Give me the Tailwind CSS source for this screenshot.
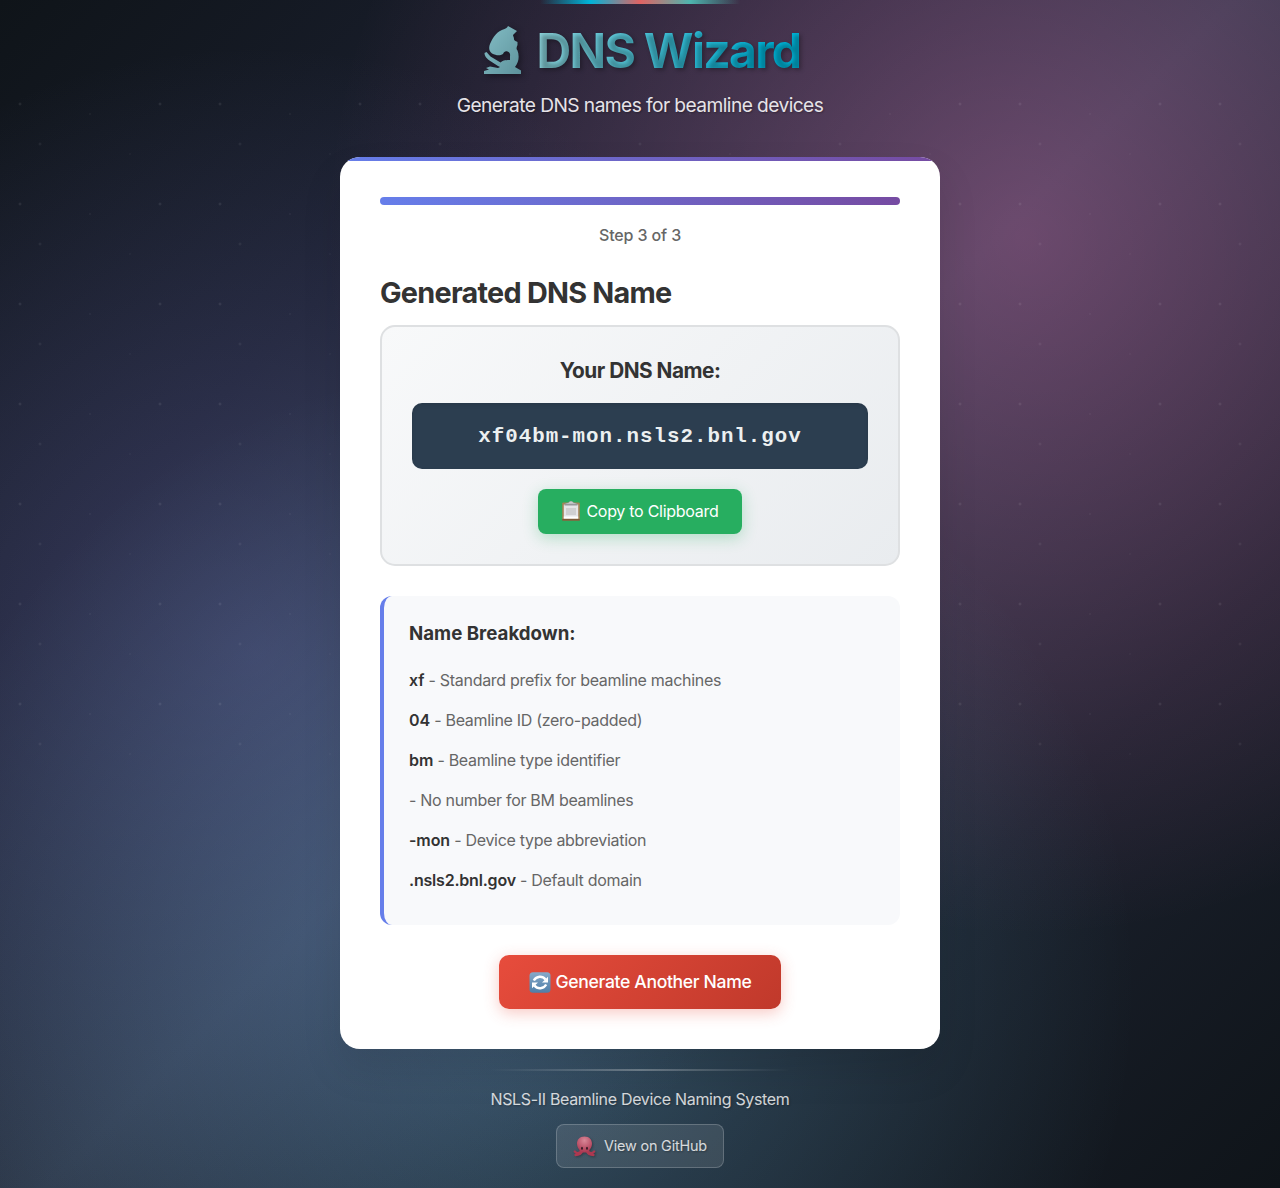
<!DOCTYPE html>
<html lang="en">
<head>
<meta charset="utf-8">
<title>DNS Wizard</title>
<script src="https://cdn.jsdelivr.net/npm/@tailwindcss/browser@4"></script>
</head>
<body class="relative h-[1188px] overflow-hidden font-['Inter',sans-serif] text-[#333] bg-[radial-gradient(circle_at_20%_55%,rgba(120,119,198,0.3)_0%,transparent_50%),radial-gradient(circle_at_80%_20%,rgba(255,119,198,0.3)_0%,transparent_50%),radial-gradient(circle_at_40%_83%,rgba(120,219,255,0.24)_0%,transparent_50%),linear-gradient(135deg,#0f1419_0%,#1a1f2e_25%,#2d3748_50%,#1a202c_75%,#0f1419_100%)]">
<!-- star field -->
<div class="absolute inset-x-0 top-[74px] h-[720px] opacity-30 bg-[radial-gradient(2px_2px_at_20px_30px,rgba(255,255,255,0.4),transparent),radial-gradient(2px_2px_at_40px_70px,rgba(255,255,255,0.3),transparent),radial-gradient(1px_1px_at_90px_40px,rgba(255,255,255,0.4),transparent),radial-gradient(1px_1px_at_130px_80px,rgba(255,255,255,0.3),transparent),radial-gradient(2px_2px_at_160px_30px,rgba(255,255,255,0.4),transparent)] bg-size-[200px_100px]"></div>
<div class="relative mx-auto flex w-[600px] flex-col items-center">
  <div class="h-1 w-[200px] bg-[linear-gradient(90deg,transparent,#00b4d8,#e06363,#4eb5ae,transparent)]"></div>
  <header class="flex h-[153px] flex-col items-center">
    <h1 class="mt-[17px] flex h-[60px] items-center pl-[3px] text-[48px] font-bold leading-[60px] tracking-[-1.7px]">
      <svg class="mr-[14px] h-[50px] w-[40px] drop-shadow-[2px_2px_3px_rgba(0,0,0,0.4)]" viewBox="0 0 40 50">
        <defs><linearGradient id="scope" x1="0" y1="0" x2="1" y2="1"><stop offset="0" stop-color="#84bec6"/><stop offset="1" stop-color="#5d929b"/></linearGradient></defs>
        <path fill="url(#scope)" d="M25 0C24 2 23 2.500 21.500 3C14 5 10 11 7 18C5.500 22 6 25 9 27.500C13 29.500 17 30 20 28C21 26 22 25 24.500 25.500C26.500 26 27.500 28 27 30V34C24 34 20 34 17.500 36.500L7.500 30.500L3.500 26L1.500 27C1.500 31 5 33.500 8 35.500L15 40L17 41L15 42L7 40.500L3 42L6 43.500L1 45V48H38V44.500L32 41C36 36 36.500 30 34.500 24.500C33 23 33.500 21 34.500 19V16C33.500 15 31 15 31 13C31 11 30 10 30 9L34 5Z"/>
      </svg>
      <span class="text-transparent bg-clip-text bg-[linear-gradient(100deg,#8fd3da,#00b4d8_85%)] [text-shadow:2px_2px_4px_rgba(0,0,0,0.3)]">DNS Wizard</span>
    </h1>
    <p class="mt-[9px] text-[19.2px] leading-[30px] tracking-[-0.58px] text-[#e6e3e8] [text-shadow:1px_1px_2px_rgba(0,0,0,0.3)]">Generate DNS names for beamline devices</p>
  </header>
  <main class="relative flex h-[892px] w-full flex-col overflow-hidden rounded-[20px] bg-white px-10 pt-10 shadow-[0_20px_40px_rgba(0,0,0,0.1)]">
    <div class="absolute inset-x-0 top-0 h-1 bg-[linear-gradient(90deg,#667eea,#764ba2)]"></div>
    <div class="h-2 shrink-0 rounded-full bg-[linear-gradient(90deg,#667eea,#764ba2)]"></div>
    <p class="mt-[18px] text-center text-[16px] font-medium leading-6 tracking-[-0.13px] text-[#666]">Step 3 of 3</p>
    <h2 class="mt-[28px] text-[28.8px] font-bold leading-9 tracking-[-0.74px]">Generated DNS Name</h2>
    <section class="mt-[14px] flex h-[241px] shrink-0 flex-col items-center rounded-[15px] border-2 border-[#dee0e2] bg-linear-[135deg] from-[#f8f9fa] to-[#e9ecef] px-[30px]">
      <h3 class="mt-[30px] text-[20.8px] font-bold leading-7 tracking-[-0.5px]">Your DNS Name:</h3>
      <div class="mt-[18px] flex h-[66px] w-full items-center justify-center rounded-[10px] bg-[#2c3e50] pt-px font-['Liberation_Mono',monospace] text-[20.8px] font-bold tracking-[1px] text-[#ecf0f1] shadow-[inset_0_2px_4px_rgba(0,0,0,0.1)]">xf04bm-mon.nsls2.bnl.gov</div>
      <button class="mt-5 flex h-[45px] w-[204px] items-center justify-center rounded-lg bg-[#27ae60] pb-px text-[16px] tracking-[-0.27px] text-white shadow-[0_4px_15px_rgba(39,174,96,0.3)]">
        <svg class="mr-[5px] h-5 w-[20px]" viewBox="0 0 20 20"><rect x="1.2" y="1.4" width="17.6" height="18" rx="1.2" fill="#a68256"/><rect x="1.2" y="18" width="17.6" height="1.6" fill="#7d5b38"/><path fill="#e5e5e8" d="M2.8 3.5h14.4v14H2.8z"/><path fill="#cfcfd1" d="M5 7h10v7H5z"/><path fill="#fff" d="M2.8 15.5h14.4v2H2.8z"/><path fill="#96989b" d="M3.5 4.6V2.8L7.7 1.6C8-.1 12-.1 12.3 1.6l4.2 1.2v1.8z"/><path fill="#c9cccf" d="M4 2.8l4-1C8.3 0 11.700 0 12 1.800l4 1z"/></svg>
        <span>Copy to Clipboard</span>
      </button>
    </section>
    <section class="mt-[30px] h-[329px] shrink-0 rounded-[12px] border-l-4 border-[#667eea] bg-[#f8f9fb] pl-[25px] pt-6 text-[16px] text-[#666]">
      <h3 class="text-[18.7px] font-bold leading-7 text-[#333]">Name Breakdown:</h3>
      <div class="mt-3 flex flex-col leading-10 tracking-[-0.3px] [&_b]:font-semibold [&_b]:tracking-[-0.1px] [&_b]:text-[#333]">
        <p><b>xf</b> - Standard prefix for beamline machines</p>
        <p><b>04</b> - Beamline ID (zero-padded)</p>
        <p><b>bm</b> - Beamline type identifier</p>
        <p>- No number for BM beamlines</p>
        <p><b>-mon</b> - Device type abbreviation</p>
        <p><b class="tracking-[-0.2px]!">.nsls2.bnl.gov</b> - Default domain</p>
      </div>
    </section>
    <button class="mx-auto mt-[30px] flex h-[54px] w-[282px] shrink-0 items-center justify-center rounded-[10px] bg-linear-[135deg] from-[#e74c3c] to-[#c0392b] text-[17.6px] font-medium tracking-[-0.35px] text-white shadow-[0_4px_15px_rgba(231,76,60,0.3)]">
      <svg class="mr-[5px] h-[21px] w-[22px]" viewBox="0 0 22 21"><defs><linearGradient id="tile" x2="0" y2="1"><stop stop-color="#86a9c9"/><stop offset="1" stop-color="#4f7ea8"/></linearGradient></defs><rect x=".5" y=".3" width="21" height="20.400" rx="3.500" fill="url(#tile)"/><path d="M4.800 8.500C7.500 3.700 13.500 3.500 16.500 7.500M17.200 12.500C14.500 17.300 8.500 17.500 5.500 13.500" fill="none" stroke="#fff" stroke-width="2.400"/><path fill="#fff" d="M19 4.800v5.700h-6zM3 16.200v-5.700h6z"/></svg>
      <span>Generate Another Name</span>
    </button>
  </main>
  <footer class="flex flex-col items-center">
    <div class="mt-5 h-[2px] w-[300px] bg-[linear-gradient(90deg,transparent,rgba(255,255,255,0.3),transparent)]"></div>
    <p class="mt-4 text-[16px] leading-6 tracking-[-0.33px] text-white/80 [text-shadow:1px_1px_2px_rgba(0,0,0,0.3)]">NSLS-II Beamline Device Naming System</p>
    <a class="mt-[13px] flex h-11 w-[168px] items-center justify-center rounded-lg border border-white/20 bg-white/10 text-[14.4px] tracking-[-0.18px] text-white/80 [text-shadow:1px_1px_2px_rgba(0,0,0,0.3)]">
      <svg class="mr-2 h-[21px] w-[23px] drop-shadow-[1px_1px_1px_rgba(0,0,0,0.3)]" viewBox="0 0 23 21"><defs><radialGradient id="head" cx=".5" cy=".25" r=".7"><stop stop-color="#d98797"/><stop offset="1" stop-color="#ad3c55"/></radialGradient></defs><path d="M8 14C8 17.500 4 18 1.800 15.500M15 14c0 3.500 4 4 6.200 1.500M9 15.500c-1 3-3 3.500-6.500 3.500M14 15.500c1 3 3 3.500 6.500 3.500" fill="none" stroke="#ad3850" stroke-width="2.300" stroke-linecap="round"/><path d="M11.500.5C6.500.5 3.800 4 4 8c.2 4 2.300 5 4 8.500h7c1.700-3.500 3.800-4.500 4-8.500C19.200 4 16.500.5 11.500.5z" fill="url(#head)"/><ellipse cx="9" cy="12.200" rx="1" ry="1.500" fill="#3b1d29"/><ellipse cx="14" cy="12.200" rx="1" ry="1.500" fill="#3b1d29"/></svg>
      <span>View on GitHub</span>
    </a>
  </footer>
</div>
</body>
</html>
